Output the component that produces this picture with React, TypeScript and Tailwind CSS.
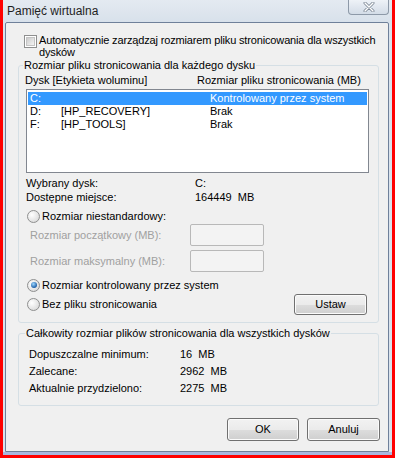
import React from "react";

const font = { fontFamily: '"Liberation Sans", Arial, sans-serif' };

function Checkbox() {
  return (
    <div className="mt-[1px] flex h-[13px] w-[13px] shrink-0 items-center justify-center border border-[#8e8f8f] bg-white">
      <div className="h-[9px] w-[9px] border border-[#c4c4c4] bg-[linear-gradient(135deg,#cbcbcb,#f4f4f4)]" />
    </div>
  );
}

function Radio({ checked = false }: { checked?: boolean }) {
  return (
    <div className="flex h-[13px] w-[13px] shrink-0 items-center justify-center rounded-full border border-[#8e8f8f] bg-[radial-gradient(circle_at_35%_35%,#ffffff,#d2d2d2)]">
      {checked && (
        <div className="h-[6px] w-[6px] rounded-full bg-[radial-gradient(circle_at_40%_35%,#9fd8ff,#1d5fa8_70%)]" />
      )}
    </div>
  );
}

function Button({ label, w, h }: { label: string; w: string; h: string }) {
  return (
    <button
      type="button"
      className={`${w} ${h} flex items-center justify-center rounded-[3px] border border-[#707070] bg-[linear-gradient(#f2f2f2_0%,#ebebeb_50%,#dddddd_51%,#cfcfcf_100%)] text-[11px] text-black shadow-[inset_0_0_0_1px_#fbfbfb]`}
    >
      {label}
    </button>
  );
}

const drives = [
  { d: "C:", label: "", size: "Kontrolowany przez system", selected: true },
  { d: "D:", label: "[HP_RECOVERY]", size: "Brak", selected: false },
  { d: "F:", label: "[HP_TOOLS]", size: "Brak", selected: false },
];

const totals = [
  ["Dopuszczalne minimum:", "16  MB"],
  ["Zalecane:", "2962  MB"],
  ["Aktualnie przydzielono:", "2275  MB"],
];

export default function App() {
  return (
    <div
      className="h-[458px] w-[395px] overflow-hidden border-x-[3px] border-b-[3px] border-[#ff0000] bg-[#d9e2ec] text-[11px] text-black"
      style={font}
    >
      {/* Title bar */}
      <div className="flex h-[22px] items-start justify-between bg-[linear-gradient(#e4eaf1,#d8e1eb)]">
        <span className="pl-[4px] pt-[3px] text-[12px] leading-[16px] text-[#1e1e1e]">Pamięć wirtualna</span>
        <div className="mr-[3px] flex h-[15px] w-[41px] items-center justify-center rounded-b-[4px] border border-t-0 border-[#8d99a8] bg-[linear-gradient(#eef2f7,#d3dce7)]">
          <svg width="12" height="10" viewBox="0 0 12 10">
            <path d="M2 1 L10 9 M10 1 L2 9" stroke="#7d8896" strokeWidth="3" strokeLinecap="round" />
            <path d="M2 1 L10 9 M10 1 L2 9" stroke="#ffffff" strokeWidth="1.4" strokeLinecap="round" />
          </svg>
        </div>
      </div>

      <div className="flex">
        <div className="ml-[2px] box-border h-[430px] w-[384px] rounded-t-[2px] border border-[#6f809a] bg-[#f0f0f0]">
          {/* Auto checkbox */}
          <div className="flex items-start gap-[2px] pl-[18px] pt-[11px] leading-[12px]">
            <Checkbox />
            <span className="whitespace-nowrap tracking-[-0.15px]">
              Automatycznie zarządzaj rozmiarem pliku stronicowania dla wszystkich
              <br />
              dysków
            </span>
          </div>

          {/* Per-drive group */}
          <fieldset className="ml-[12px] w-[361px] rounded-[3px] border border-[#d5dfe5] pb-[7px] pl-[6px]">
            <legend className="ml-[-2px] whitespace-nowrap px-[1px] leading-[14px]">
              Rozmiar pliku stronicowania dla każdego dysku
            </legend>
            <div className="mt-[2px] flex h-[13px] whitespace-nowrap leading-[13px]">
              <span className="w-[172px]">Dysk [Etykieta woluminu]</span>
              <span>Rozmiar pliku stronicowania (MB)</span>
            </div>
            <div className="ml-[1px] mt-[2px] box-border h-[84px] w-[343px] border border-[#828790] bg-white px-[1px] pt-[2px]">
              {drives.map((r) => (
                <div
                  key={r.d}
                  className={`flex h-[13px] whitespace-nowrap pl-[2px] leading-[13px] ${r.selected ? "bg-[#3399ff] text-white" : ""}`}
                >
                  <span className="w-[31px]">{r.d}</span>
                  <span className="w-[149px]">{r.label}</span>
                  <span>{r.size}</span>
                </div>
              ))}
            </div>

            <div className="ml-[1px] mt-[3px] leading-[14px]">
              <div className="flex">
                <span className="w-[169px]">Wybrany dysk:</span>
                <span>C:</span>
              </div>
              <div className="flex">
                <span className="w-[169px]">Dostępne miejsce:</span>
                <span className="whitespace-pre">164449  MB</span>
              </div>
            </div>

            <div className="ml-[2px] mt-[5px] flex h-[14px] items-center gap-[2px] leading-[14px]">
              <Radio />
              <span>Rozmiar niestandardowy:</span>
            </div>
            <div className="ml-[5px] mt-[1px] flex h-[22px] items-center text-[#a0a0a0]">
              <span className="w-[160px]">Rozmiar początkowy (MB):</span>
              <div className="box-border h-[22px] w-[74px] rounded-[2px] border border-[#b8b8b8] bg-[#f3f3f3]" />
            </div>
            <div className="ml-[5px] mt-[4px] flex h-[22px] items-center text-[#a0a0a0]">
              <span className="w-[160px]">Rozmiar maksymalny (MB):</span>
              <div className="box-border h-[22px] w-[74px] rounded-[2px] border border-[#b8b8b8] bg-[#f3f3f3]" />
            </div>

            <div className="ml-[2px] mt-[6px] flex h-[14px] items-center gap-[2px] leading-[14px]">
              <Radio checked />
              <span>Rozmiar kontrolowany przez system</span>
            </div>
            <div className="ml-[2px] mt-[2px] flex h-[21px] items-center">
              <div className="flex items-center gap-[2px]">
                <Radio />
                <span>Bez pliku stronicowania</span>
              </div>
              <div className="ml-auto mr-[11px]">
                <Button label="Ustaw" w="w-[73px]" h="h-[21px]" />
              </div>
            </div>
          </fieldset>

          {/* Totals group */}
          <fieldset className="ml-[12px] mt-[3px] w-[361px] rounded-[3px] border border-[#d5dfe5] pb-[8px] pl-[10px]">
            <legend className="ml-[-4px] whitespace-nowrap px-[1px] leading-[14px]">
              Całkowity rozmiar plików stronicowania dla wszystkich dysków
            </legend>
            <div className="mt-[6px] leading-[17px]">
              {totals.map(([k, v]) => (
                <div key={k} className="flex">
                  <span className="w-[151px]">{k}</span>
                  <span className="whitespace-pre">{v}</span>
                </div>
              ))}
            </div>
          </fieldset>

          <div className="mt-[12px] flex justify-end gap-[8px] pr-[8px]">
            <Button label="OK" w="w-[72px]" h="h-[23px]" />
            <Button label="Anuluj" w="w-[73px]" h="h-[23px]" />
          </div>
        </div>
      </div>
      <div className="h-[3px] bg-[#aab7df]" />
    </div>
  );
}
